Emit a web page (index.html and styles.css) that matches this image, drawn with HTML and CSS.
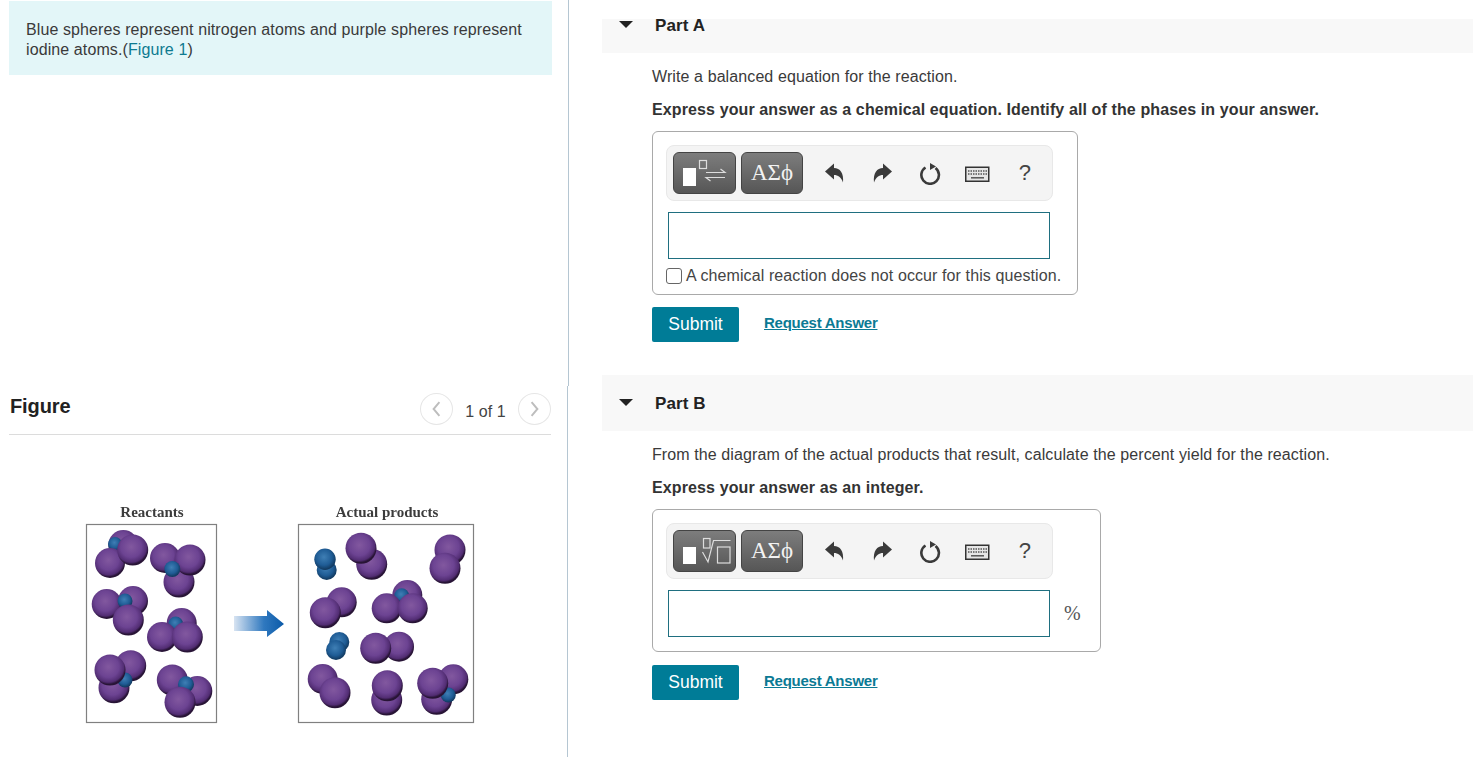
FILE: index.html
```html
<!DOCTYPE html>
<html lang="en">
<head>
<meta charset="utf-8">
<title>Chemistry problem</title>
<link rel="stylesheet" href="styles.css">
</head>
<body>
<div class="page">
  <aside class="left">
    <section class="intro-pane">
      <p class="intro">Blue spheres represent nitrogen atoms and purple spheres represent iodine atoms.(<a class="fig-link" href="#">Figure 1</a>)</p>
    </section>
    <section class="figure-pane">
      <header class="figure-head">
        <h2 class="figure-title">Figure</h2>
        <div class="pager">
          <span class="pager-btn"><svg width="32" height="32" viewBox="0 0 32 32"><path class="chev" d="M19 9l-6 7 6 7"/></svg></span>
          <span class="pager-text">1 of 1</span>
          <span class="pager-btn"><svg width="32" height="32" viewBox="0 0 32 32"><path class="chev" d="M13 9l6 7-6 7"/></svg></span>
        </div>
      </header>
      <svg class="diagram" width="400" height="235" viewBox="80 495 400 235">
        <defs>
          <radialGradient id="p" cx="45%" cy="40%" r="56%">
            <stop offset="0" stop-color="#82589f"/>
            <stop offset=".6" stop-color="#6c4392"/>
            <stop offset=".88" stop-color="#522d73"/>
            <stop offset="1" stop-color="#281436"/>
          </radialGradient>
          <radialGradient id="b" cx="45%" cy="40%" r="58%">
            <stop offset="0" stop-color="#3f7fb5"/>
            <stop offset=".65" stop-color="#1f5c95"/>
            <stop offset="1" stop-color="#123a60"/>
          </radialGradient>
          <linearGradient id="arrow" x1="0" x2="1" y1="0" y2="0">
            <stop offset="0" stop-color="#d8e4f2"/>
            <stop offset=".6" stop-color="#2f78bf"/>
            <stop offset="1" stop-color="#0b5aa8"/>
          </linearGradient>
        </defs>
        <text class="label" x="152" y="517" text-anchor="middle">Reactants</text>
        <text class="label" x="387" y="517" text-anchor="middle">Actual products</text>
        <rect class="frame" x="86.5" y="524.5" width="130" height="198"/>
        <rect class="frame" x="298.5" y="524.5" width="175" height="198"/>
        <path d="M234 616H267V610L284 624 267 637V631H234Z" fill="url(#arrow)"/>

        <g fill="url(#p)">
          <circle cx="123.3" cy="545" r="15"/><circle cx="115" cy="544" r="7" fill="url(#b)"/><circle cx="110" cy="563" r="15"/><circle cx="132.7" cy="550" r="15.5"/>
          <circle cx="179" cy="582" r="15.5"/><circle cx="165" cy="558" r="15"/><circle cx="190" cy="560" r="15.5"/><circle cx="172.3" cy="569" r="8" fill="url(#b)"/>
          <circle cx="133" cy="601" r="15"/><circle cx="106.7" cy="604" r="15"/><circle cx="125" cy="601" r="7.5" fill="url(#b)"/><circle cx="128.3" cy="620" r="15.5"/>
          <circle cx="181.7" cy="623" r="15"/><circle cx="175.7" cy="624" r="7.5" fill="url(#b)"/><circle cx="162" cy="637" r="15"/><circle cx="187.3" cy="637" r="15.5"/>
          <circle cx="114" cy="687.7" r="15.5"/><circle cx="130.7" cy="665.7" r="15.5"/><circle cx="125" cy="680" r="7.5" fill="url(#b)"/><circle cx="110" cy="670" r="15.5"/>
          <circle cx="197.3" cy="691" r="15"/><circle cx="172.3" cy="680" r="15.5"/><circle cx="186" cy="684.3" r="8" fill="url(#b)"/><circle cx="180" cy="702.3" r="15.5"/>

          <circle cx="326.7" cy="570" r="10" fill="url(#b)"/><circle cx="325" cy="559.3" r="10.7" fill="url(#b)"/>
          <circle cx="371.7" cy="564.3" r="15.5"/><circle cx="361" cy="548.3" r="15.5"/>
          <circle cx="450" cy="550" r="15.5"/><circle cx="445" cy="568.3" r="15.5"/>
          <circle cx="341.7" cy="602.3" r="15"/><circle cx="325.3" cy="612.7" r="15.5"/>
          <circle cx="407.3" cy="595" r="15"/><circle cx="401.7" cy="595.7" r="7.5" fill="url(#b)"/><circle cx="386.7" cy="608.3" r="15"/><circle cx="412.7" cy="608.3" r="15"/>
          <circle cx="339.3" cy="642" r="10" fill="url(#b)"/><circle cx="336" cy="650" r="10" fill="url(#b)"/>
          <circle cx="399" cy="646.7" r="15"/><circle cx="375.7" cy="648.3" r="15.5"/>
          <circle cx="322.7" cy="679" r="15"/><circle cx="335" cy="692.7" r="15.5"/>
          <circle cx="386.7" cy="700" r="15.5"/><circle cx="387.3" cy="685.7" r="15.5"/>
          <circle cx="436.7" cy="699.3" r="15.5"/><circle cx="453.3" cy="679.3" r="15"/><circle cx="448.3" cy="695" r="7.5" fill="url(#b)"/><circle cx="432.7" cy="683.3" r="15.5"/>
        </g>
      </svg>
    </section>
  </aside>

  <main class="right">
    <div class="scroller">
      <section class="part part-a">
        <header class="part-head">
          <span class="caret"></span>
          <h3 class="part-title">Part A</h3>
        </header>
        <div class="part-body">
          <p class="prompt">Write a balanced equation for the reaction.</p>
          <p class="instr">Express your answer as a chemical equation. Identify all of the phases in your answer.</p>
          <div class="answer answer-a">
            <div class="toolbar">
              <button class="tool-btn" type="button">
                <svg width="63" height="42" viewBox="0 0 63 42"><rect x="10" y="16" width="13" height="18" fill="#fff"/><rect class="ln" x="26.500" y="8.500" width="7" height="8"/><path class="ln" d="M33 20.500H52L47.500 17M52 25.500H33L37.500 29"/></svg>
              </button>
              <button class="tool-btn tool-greek" type="button">ΑΣϕ</button>
              <div class="tools">
                <svg class="tool-ic" width="24" height="24" viewBox="0 0 24 24"><path class="solid" d="M1 10.500L10 2.500V7C16 7 20 12 19 21.500C17 16 14 14 10 14V18.500Z"/></svg>
                <svg class="tool-ic" width="24" height="24" viewBox="0 0 24 24"><path class="solid" d="M23 10.500L14 2.500V7C8 7 4 12 5 21.500C7 16 10 14 14 14V18.500Z"/></svg>
                <svg class="tool-ic" width="24" height="24" viewBox="0 0 24 24"><path class="ring" d="M7.500 6.500A8.800 8.800 0 1 0 17.500 7"/><path class="solid" d="M12 2L18 5.500 12 9Z"/></svg>
                <svg class="tool-ic" width="28" height="24" viewBox="0 0 28 24"><rect x="2.750" y="6.250" width="23" height="14" fill="#e6e6e6" stroke="#333" stroke-width="1.500"/><path class="keys" d="M5 10H24M5 13H24"/><path class="keyline" d="M8 16.800H21"/></svg>
                <span class="help">?</span>
              </div>
            </div>
            <div class="field"></div>
            <label class="check-row"><span class="check"></span>A chemical reaction does not occur for this question.</label>
          </div>
          <div class="actions">
            <button class="submit" type="button">Submit</button>
            <a class="req" href="#">Request Answer</a>
          </div>
        </div>
      </section>

      <section class="part part-b">
        <header class="part-head">
          <span class="caret"></span>
          <h3 class="part-title">Part B</h3>
        </header>
        <div class="part-body">
          <p class="prompt">From the diagram of the actual products that result, calculate the percent yield for the reaction.</p>
          <p class="instr">Express your answer as an integer.</p>
          <div class="answer answer-b">
            <div class="toolbar">
              <button class="tool-btn" type="button">
                <svg width="63" height="42" viewBox="0 0 63 42"><rect x="10" y="17" width="13" height="17" fill="#fff"/><rect class="ln" x="30.500" y="8.500" width="6.500" height="9.500"/><path class="ln" d="M29.500 22L35 32 40.500 10.500H57.500"/><rect class="ln" x="44.500" y="17" width="12.500" height="16"/></svg>
              </button>
              <button class="tool-btn tool-greek" type="button">ΑΣϕ</button>
              <div class="tools">
                <svg class="tool-ic" width="24" height="24" viewBox="0 0 24 24"><path class="solid" d="M1 10.500L10 2.500V7C16 7 20 12 19 21.500C17 16 14 14 10 14V18.500Z"/></svg>
                <svg class="tool-ic" width="24" height="24" viewBox="0 0 24 24"><path class="solid" d="M23 10.500L14 2.500V7C8 7 4 12 5 21.500C7 16 10 14 14 14V18.500Z"/></svg>
                <svg class="tool-ic" width="24" height="24" viewBox="0 0 24 24"><path class="ring" d="M7.500 6.500A8.800 8.800 0 1 0 17.500 7"/><path class="solid" d="M12 2L18 5.500 12 9Z"/></svg>
                <svg class="tool-ic" width="28" height="24" viewBox="0 0 28 24"><rect x="2.750" y="6.250" width="23" height="14" fill="#e6e6e6" stroke="#333" stroke-width="1.500"/><path class="keys" d="M5 10H24M5 13H24"/><path class="keyline" d="M8 16.800H21"/></svg>
                <span class="help">?</span>
              </div>
            </div>
            <div class="field-row">
              <div class="field"></div>
              <span class="unit">%</span>
            </div>
          </div>
          <div class="actions">
            <button class="submit" type="button">Submit</button>
            <a class="req" href="#">Request Answer</a>
          </div>
        </div>
      </section>
    </div>
  </main>
</div>
</body>
</html>
```
FILE: styles.css
```css
* { box-sizing: border-box; }
html, body { margin: 0; padding: 0; background: #fff; }
body {
  width: 1473px;
  height: 757px;
  overflow: hidden;
  font-family: "Liberation Sans", Arial, sans-serif;
  font-size: 16px;
  line-height: 20px;
  letter-spacing: .1px;
  color: #333;
}
p, h2, h3 { margin: 0; }

.page { display: flex; height: 757px; }

/* left column */
.left { width: 569px; flex: none; display: flex; flex-direction: column; }
.intro-pane {
  height: 386px;
  flex: none;
  padding: 1px 16px 0 9px;
  border-right: 1px solid #b5c6d2;
}
.intro {
  height: 74px;
  padding: 19px 17px 0;
  background: #e3f6f8;
  color: #3a3a3a;
}
.fig-link { color: #0d7a90; text-decoration: none; }

.figure-pane {
  width: 568px;
  flex: 1;
  padding: 0 16px 0 9px;
  border-right: 1px solid #b5c6d2;
}
.figure-head {
  height: 49px;
  display: flex;
  justify-content: space-between;
  border-bottom: 1px solid #dcdcdc;
}
.figure-title {
  padding: 10px 0 0 1px;
  font-size: 20px;
  line-height: 20px;
  letter-spacing: -.1px;
  color: #222;
}
.pager { display: flex; align-items: flex-start; padding-top: 7px; }
.pager-btn {
  width: 33px;
  height: 32px;
  display: flex;
  align-items: center;
  justify-content: center;
  border: 1px solid #e6e6e6;
  border-radius: 50%;
}
.chev { fill: none; stroke: #bdbdbd; stroke-width: 2; }
.pager-text { width: 65px; text-align: center; padding-top: 9px; color: #444; }
.diagram { display: block; margin: 60px 0 0 71px; filter: blur(.4px); }
.label { font-family: "Liberation Serif", serif; font-weight: bold; font-size: 15px; letter-spacing: 0; fill: #3c3c3c; }
.frame { fill: #fff; stroke: #808080; stroke-width: 1.200; }

/* right column */
.right { flex: 1; min-width: 0; padding: 19px 0 0 33px; }
.scroller { height: 738px; overflow: hidden; }
.part-a { margin-top: -22px; }
.part-b { margin-top: 33px; }
.part-head {
  height: 56px;
  display: flex;
  align-items: center;
  background: #f8f8f8;
  padding-left: 17px;
}
.caret {
  width: 0;
  height: 0;
  border-left: 7.500px solid transparent;
  border-right: 7.500px solid transparent;
  border-top: 7.500px solid #222;
  margin-top: -2px;
}
.part-title { margin: 1px 0 0 22px; font-size: 17px; line-height: 20px; color: #222; }

.part-body { padding-left: 50px; }
.prompt { padding-top: 14px; color: #3a3a3a; }
.instr { padding-top: 13px; font-weight: bold; letter-spacing: .115px; }

.answer { margin-top: 11px; border: 1px solid #a9a9a9; border-radius: 6px; padding: 13px 13px 0; }
.answer-a { width: 426px; height: 164px; }
.answer-b { width: 449px; height: 143px; }

.toolbar {
  width: 387px;
  height: 56px;
  display: flex;
  align-items: center;
  padding-left: 6px;
  background: #f4f4f4;
  border: 1px solid #e8e8e8;
  border-radius: 8px;
}
.tool-btn {
  width: 63px;
  height: 42px;
  padding: 0;
  display: block;
  background: linear-gradient(#7d7d7d, #565656);
  border: 1px solid #444;
  border-radius: 6px;
  overflow: hidden;
}
.tool-btn svg { display: block; margin: -1px; }
.ln { fill: none; stroke: #ddd; stroke-width: 1.200; }
.tool-greek {
  width: 62px;
  margin-left: 5px;
  font-family: "Liberation Serif", serif;
  font-size: 23px;
  line-height: 34px;
  letter-spacing: 0;
  color: #f2f2f2;
}
.tools { display: flex; align-items: center; margin-left: 21px; }
.tool-ic { display: block; flex: none; }
.tool-ic:nth-child(2) { margin-left: 21px; }
.tool-ic:nth-child(3) { margin-left: 25px; }
.tool-ic:nth-child(4) { margin-left: 21px; }
.solid { fill: #3a3a3a; }
.ring { fill: none; stroke: #3a3a3a; stroke-width: 2.600; }
.keys { fill: none; stroke: #555; stroke-width: 1.500; stroke-dasharray: 1.500 1; }
.keyline { fill: none; stroke: #555; stroke-width: 1.500; }
.help { width: 30px; margin-left: 19px; font-size: 22px; text-align: center; color: #444; line-height: 24px; }

.field {
  width: 382px;
  height: 47px;
  margin: 11px 0 0 2px;
  background: #fff;
  border: 1px solid #1f6f80;
}
.field-row { display: flex; align-items: flex-start; }
.unit {
  margin: 22px 0 0 14px;
  font-family: "Liberation Serif", serif;
  font-size: 20px;
  line-height: 24px;
  letter-spacing: 0;
  color: #555;
}
.check-row { display: flex; align-items: center; margin-top: 7px; height: 20px; color: #444; white-space: nowrap; }
.check {
  width: 16px;
  height: 16px;
  margin-right: 4px;
  background: #fff;
  border: 1px solid #666;
  border-radius: 3px;
}

.actions { display: flex; align-items: center; margin-top: 12px; }
.answer-b + .actions { margin-top: 13px; }
.submit {
  width: 87px;
  height: 35px;
  padding: 0;
  border: 0;
  border-radius: 2px;
  background: #007c97;
  color: #fff;
  font-family: "Liberation Sans", Arial, sans-serif;
  font-size: 17.500px;
  letter-spacing: 0;
}
.req {
  margin-left: 25px;
  margin-top: -4px;
  font-size: 15px;
  font-weight: bold;
  letter-spacing: -.25px;
  color: #0b7a94;
  text-decoration: underline;
}
```
